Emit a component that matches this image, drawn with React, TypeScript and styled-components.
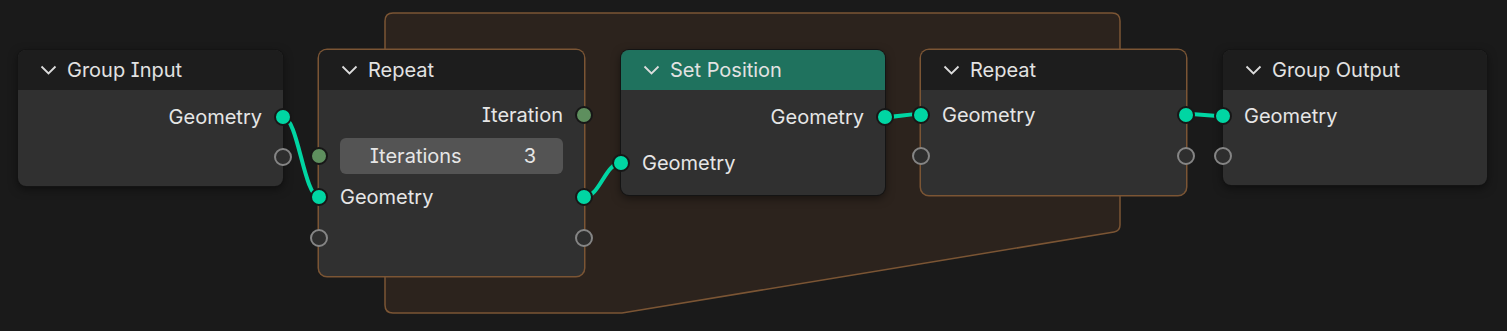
import styled, { createGlobalStyle } from 'styled-components';

const GlobalStyle = createGlobalStyle`
  html, body {
    margin: 0;
    padding: 0;
    background: #1a1a1a;
  }
  body {
    font-family: Inter, 'Noto Sans', sans-serif;
    font-feature-settings: 'cv08';
  }
`;

const Canvas = styled.div`
  position: relative;
  width: 1507px;
  height: 331px;
  overflow: hidden;
  background: #1a1a1a;
`;

const Layer = styled.svg`
  position: absolute;
  left: 0;
  top: 0;
`;

const NodeBox = styled.div<{ $x: number; $y: number; $w: number; $zone?: boolean }>`
  position: absolute;
  left: ${({ $x }) => $x}px;
  top: ${({ $y }) => $y}px;
  width: ${({ $w }) => $w}px;
  border-radius: 8px;
  background: #303030;
  box-shadow: ${({ $zone }) =>
    $zone
      ? '0 0 0 1.5px #7b5534'
      : '0 0 0 1px #141414, 0 3px 10px rgba(0, 0, 0, 0.5)'};
`;

const Header = styled.div<{ $color?: string }>`
  height: 40px;
  display: flex;
  align-items: center;
  padding-left: 22px;
  box-sizing: border-box;
  background: ${({ $color }) => $color || '#1d1d1d'};
  border-radius: 8px 8px 0 0;
  color: #e2e2e2;
  font-size: 20px;
`;

const Title = styled.span`
  margin-left: 10px;
  margin-top: -1px;
`;

const Body = styled.div<{ $top: number; $bottom: number }>`
  display: flex;
  flex-direction: column;
  padding-top: ${({ $top }) => $top}px;
  padding-bottom: ${({ $bottom }) => $bottom}px;
`;

const Row = styled.div<{ $h?: number; $out?: boolean }>`
  position: relative;
  height: ${({ $h }) => $h ?? 40}px;
  display: flex;
  align-items: center;
  justify-content: ${({ $out }) => ($out ? 'flex-end' : 'flex-start')};
  padding: 0 21px;
  color: #e6e6e6;
  font-size: 20px;
`;

const Gap = styled.div<{ $h: number }>`
  height: ${({ $h }) => $h}px;
`;

const socketFill = {
  geo: '#00d6a3',
  int: '#5e8f5e',
  empty: '#2e2e2e',
};

const Socket = styled.span<{ $side: 'left' | 'right'; $kind: 'geo' | 'int' | 'empty' }>`
  position: absolute;
  top: 50%;
  ${({ $side }) => ($side === 'left' ? 'left: -9px;' : 'right: -9px;')}
  width: 18px;
  height: 18px;
  margin-top: -9px;
  box-sizing: border-box;
  border-radius: 50%;
  background: ${({ $kind }) => socketFill[$kind]};
  border: ${({ $kind }) => ($kind === 'empty' ? '2px solid #858585' : '2px solid #171717')};
`;

const Field = styled.div`
  flex: 1;
  height: 36px;
  display: flex;
  align-items: center;
  justify-content: space-between;
  padding: 0 27px 0 30px;
  background: #545454;
  border-radius: 6px;
  color: #e6e6e6;
`;

function Chevron() {
  return (
    <svg width="17" height="10" viewBox="0 0 17 10">
      <path d="M1.5 1.5 L8.5 8.5 L15.5 1.5" fill="none" stroke="#dcdcdc" strokeWidth="1.8" />
    </svg>
  );
}

function NodeHeader({ title, color }: { title: string; color?: string }) {
  return (
    <Header $color={color}>
      <Chevron />
      <Title>{title}</Title>
    </Header>
  );
}

export default function App() {
  return (
    <Canvas>
      <GlobalStyle />
      <Layer width="1507" height="331">
        <path
          d="M385 21 Q385 13 393 13 L1112 13 Q1120 13 1120 21 L1120 225 Q1120 231 1114 232 L622 313 L393 313 Q385 313 385 305 Z"
          fill="#2c231d"
          stroke="#7b5534"
          strokeWidth="1.5"
        />
      </Layer>
      <Layer width="1507" height="331">
        <g fill="none" stroke="#00d6a3" strokeWidth="4" strokeLinecap="round">
          <path d="M283 117 C298 117 304 197 319 197" />
          <path d="M584 197 C600 197 605 163 621 163" />
          <path d="M884 117 C900 117 905 114 921 114" />
          <path d="M1186 114 C1202 114 1207 116 1223 116" />
        </g>
      </Layer>

      <NodeBox $x={18} $y={50} $w={265}>
        <NodeHeader title="Group Input" />
        <Body $top={7} $bottom={9}>
          <Row $out>
            Geometry
            <Socket $side="right" $kind="geo" />
          </Row>
          <Row $out>
            <Socket $side="right" $kind="empty" />
          </Row>
        </Body>
      </NodeBox>

      <NodeBox $x={319} $y={50} $w={265} $zone>
        <NodeHeader title="Repeat" />
        <Body $top={4} $bottom={18}>
          <Row $h={41} $out>
            Iteration
            <Socket $side="right" $kind="int" />
          </Row>
          <Row $h={41}>
            <Socket $side="left" $kind="int" />
            <Field>
              <span>Iterations</span>
              <span>3</span>
            </Field>
          </Row>
          <Row $h={41}>
            <Socket $side="left" $kind="geo" />
            Geometry
            <Socket $side="right" $kind="geo" />
          </Row>
          <Row $h={41}>
            <Socket $side="left" $kind="empty" />
            <Socket $side="right" $kind="empty" />
          </Row>
        </Body>
      </NodeBox>

      <NodeBox $x={621} $y={50} $w={264}>
        <NodeHeader title="Set Position" color="#1f725e" />
        <Body $top={7} $bottom={12}>
          <Row $out>
            Geometry
            <Socket $side="right" $kind="geo" />
          </Row>
          <Gap $h={6} />
          <Row>
            <Socket $side="left" $kind="geo" />
            Geometry
          </Row>
        </Body>
      </NodeBox>

      <NodeBox $x={921} $y={50} $w={265} $zone>
        <NodeHeader title="Repeat" />
        <Body $top={4} $bottom={19}>
          <Row $h={41}>
            <Socket $side="left" $kind="geo" />
            Geometry
            <Socket $side="right" $kind="geo" />
          </Row>
          <Row $h={41}>
            <Socket $side="left" $kind="empty" />
            <Socket $side="right" $kind="empty" />
          </Row>
        </Body>
      </NodeBox>

      <NodeBox $x={1223} $y={50} $w={264}>
        <NodeHeader title="Group Output" />
        <Body $top={6} $bottom={9}>
          <Row>
            <Socket $side="left" $kind="geo" />
            Geometry
          </Row>
          <Row>
            <Socket $side="left" $kind="empty" />
          </Row>
        </Body>
      </NodeBox>
    </Canvas>
  );
}
